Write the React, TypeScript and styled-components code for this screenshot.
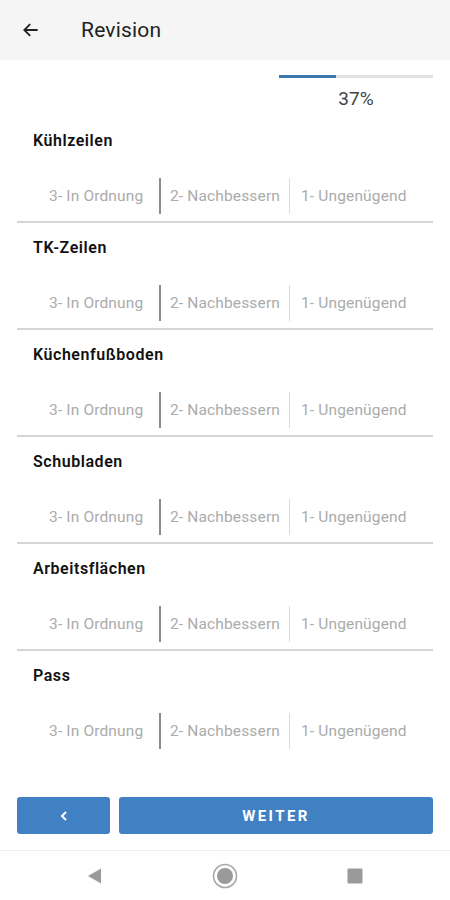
import React from 'react'
import styled, { createGlobalStyle } from 'styled-components'

const GlobalStyle = createGlobalStyle`
  html, body {
    margin: 0;
    padding: 0;
    background: #ffffff;
    font-family: Roboto, "Noto Sans", "Liberation Sans", sans-serif;
  }
  * { box-sizing: border-box; }
`

const sections = ['Kühlzeilen', 'TK-Zeilen', 'Küchenfußboden', 'Schubladen', 'Arbeitsflächen', 'Pass']
const options = ['3- In Ordnung', '2- Nachbessern', '1- Ungenügend']
const progress = 37

export default function App() {
  return (
    <>
      <GlobalStyle />
      <Screen>
        <AppBar>
          <IconButton aria-label="Zurück">
            <svg width="20" height="20" viewBox="0 0 24 24">
              <path d="M20 12H5M11 5l-7 7 7 7" fill="none" stroke="#222" strokeWidth="2.2" />
            </svg>
          </IconButton>
          <Title>Revision</Title>
        </AppBar>

        <Content>
          <ProgressBlock>
            <Track>
              <Fill style={{ width: `${progress}%` }} />
            </Track>
            <Percent>{progress}%</Percent>
          </ProgressBlock>

          {sections.map((name, i) => (
            <Section key={name} last={i === sections.length - 1}>
              <SectionTitle>{name}</SectionTitle>
              <OptionGroup>
                {options.map((opt, j) => (
                  <Option key={opt} divider={j === 0 ? 'strong' : j === 1 ? 'light' : 'none'}>
                    {opt}
                  </Option>
                ))}
              </OptionGroup>
            </Section>
          ))}
        </Content>

        <ButtonBar>
          <BackButton aria-label="Zurück">
            <svg width="12" height="12" viewBox="0 0 12 12">
              <path d="M8 2L4 6l4 4" fill="none" stroke="#fff" strokeWidth="2" />
            </svg>
          </BackButton>
          <NextButton>WEITER</NextButton>
        </ButtonBar>

        <NavBar>
          <svg width="18" height="18" viewBox="0 0 18 18">
            <path d="M15 1.5v15L2 9z" fill="#9a9a9a" />
          </svg>
          <svg width="26" height="26" viewBox="0 0 26 26">
            <circle cx="13" cy="13" r="11.5" fill="none" stroke="#a8a8a8" strokeWidth="1.6" />
            <circle cx="13" cy="13" r="8" fill="#9a9a9a" />
          </svg>
          <svg width="18" height="18" viewBox="0 0 18 18">
            <rect x="1.5" y="1.5" width="15" height="15" rx="1" fill="#9a9a9a" />
          </svg>
        </NavBar>
      </Screen>
    </>
  )
}

const Screen = styled.div`
  width: 450px;
  height: 900px;
  display: flex;
  flex-direction: column;
  overflow: hidden;
`

const AppBar = styled.header`
  height: 60px;
  flex-shrink: 0;
  display: flex;
  align-items: center;
  padding-left: 20px;
  background: #f5f5f5;
`

const IconButton = styled.button`
  width: 22px;
  height: 22px;
  padding: 0;
  border: none;
  background: none;
  display: flex;
  align-items: center;
  justify-content: center;
  cursor: pointer;
`

const Title = styled.h1`
  margin: 0 0 0 39px;
  font-size: 21px;
  font-weight: 400;
  letter-spacing: 0.2px;
  color: #222;
`

const Content = styled.main`
  flex: 1;
  padding: 0 17px;
`

const ProgressBlock = styled.div`
  margin: 15px 0 7px auto;
  width: 154px;
  display: flex;
  flex-direction: column;
  align-items: center;
`

const Track = styled.div`
  width: 100%;
  height: 3px;
  background: #e2e2e2;
`

const Fill = styled.div`
  height: 100%;
  background: #3c78b0;
`

const Percent = styled.div`
  margin-top: 11px;
  font-size: 19px;
  line-height: 20px;
  color: #444;
`

const Section = styled.section<{ last?: boolean }>`
  padding-top: 15px;
  padding-bottom: 7px;
  border-bottom: 2px solid ${p => (p.last ? 'transparent' : '#d5d5d5')};
`

const SectionTitle = styled.h2`
  margin: 0 0 27px 16px;
  font-size: 16px;
  line-height: 20px;
  font-weight: 600;
  letter-spacing: 0.55px;
  color: #111;
`

const OptionGroup = styled.div`
  margin: 0 15px 0 16px;
  display: grid;
  grid-template-columns: repeat(3, 1fr);
  height: 36px;
`

const Option = styled.div<{ divider: 'strong' | 'light' | 'none' }>`
  display: flex;
  align-items: center;
  justify-content: center;
  font-size: 15.5px;
  letter-spacing: 0.15px;
  color: #ababab;
  white-space: nowrap;
  border-right: ${p =>
    p.divider === 'strong' ? '2px solid #8c8c8c' : p.divider === 'light' ? '1px solid #dcdcdc' : 'none'};
`

const ButtonBar = styled.div`
  display: flex;
  gap: 9px;
  padding: 0 17px 16px;
`

const BaseButton = styled.button`
  height: 37px;
  border: none;
  border-radius: 3px;
  background: #4180c2;
  color: #fff;
  display: flex;
  align-items: center;
  justify-content: center;
  cursor: pointer;
`

const BackButton = styled(BaseButton)`
  width: 93px;
`

const NextButton = styled(BaseButton)`
  flex: 1;
  font-family: Roboto, "Liberation Sans", sans-serif;
  font-size: 15px;
  font-weight: 700;
  letter-spacing: 2.4px;
`

const NavBar = styled.nav`
  height: 50px;
  flex-shrink: 0;
  border-top: 1px solid #eeeeee;
  display: grid;
  grid-template-columns: 95px 260px 95px;
  justify-items: center;
  align-items: center;
  padding: 0;
  & > svg:first-child { justify-self: end; margin-right: -9px; }
  & > svg:last-child { justify-self: start; margin-left: -9px; }
`
